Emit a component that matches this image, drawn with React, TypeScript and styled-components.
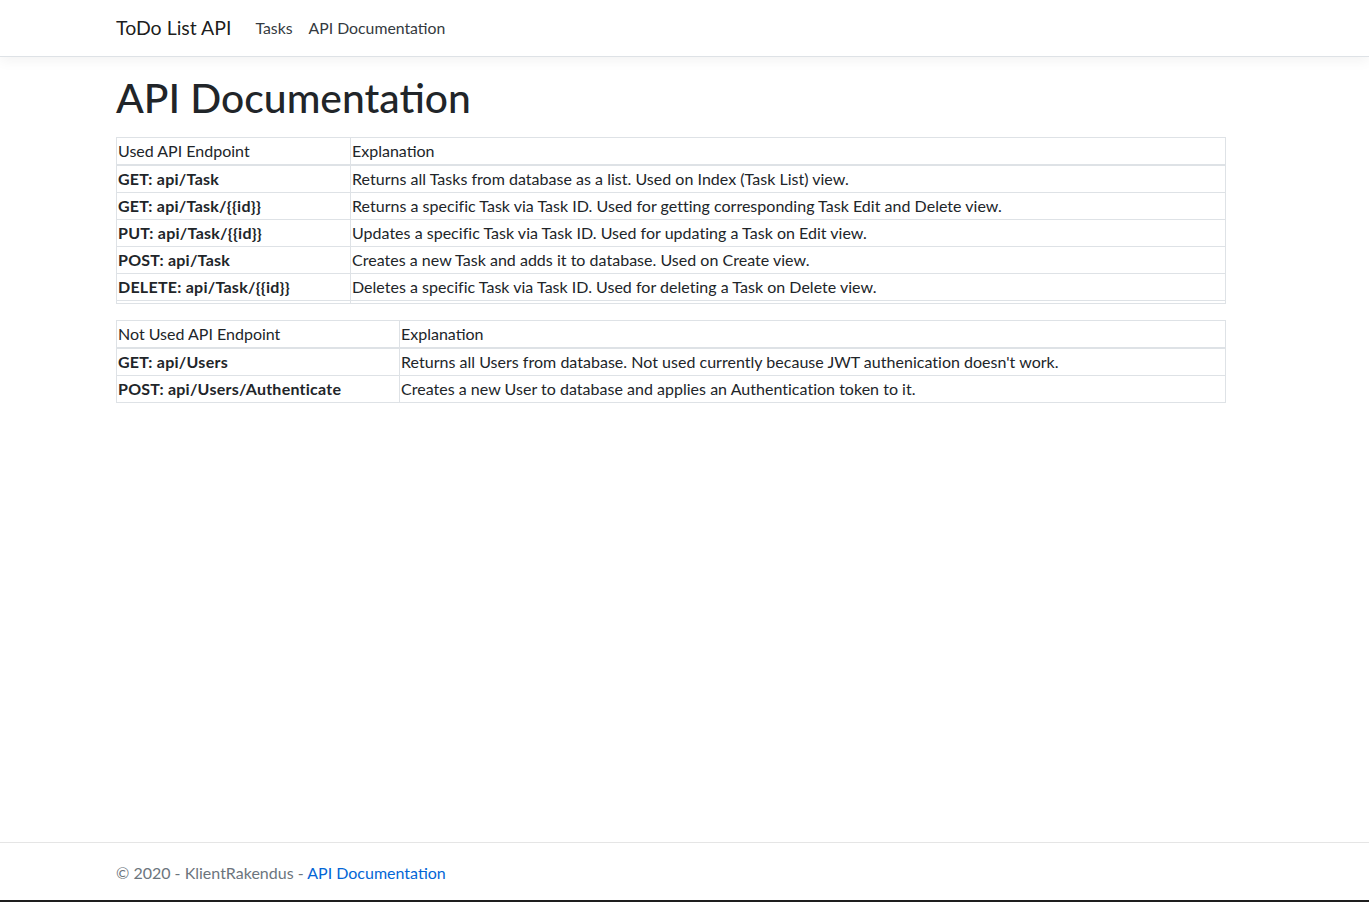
import React from "react";
import styled, { createGlobalStyle } from "styled-components";

const GlobalStyle = createGlobalStyle`
  html, body { margin: 0; padding: 0; }
  body {
    font-family: Lato, "Liberation Sans", Arial, sans-serif;
    font-size: 16px;
    line-height: 1.5;
    color: #212529;
    background: #fff;
  }
  * { box-sizing: border-box; }
`;

const Page = styled.div`
  min-height: 902px;
  display: flex;
  flex-direction: column;
`;

const NavBar = styled.header`
  height: 57px;
  border-bottom: 1px solid #dee2e6;
  box-shadow: 0 4px 12px rgba(0, 0, 0, 0.05);
  margin-bottom: 16px;
  background: #fff;
`;

const Container = styled.div`
  width: 1110px;
  margin-left: 116px;
`;

const NavInner = styled(Container)`
  height: 56px;
  display: flex;
  align-items: center;
`;

const Brand = styled.a`
  font-size: 19.5px;
  line-height: 30px;
  color: rgba(0, 0, 0, 0.9);
  text-decoration: none;
  margin-right: 16px;
`;

const NavLink = styled.a`
  font-size: 15.8px;
  line-height: 24px;
  padding: 8px;
  color: #343a40;
  text-decoration: none;
`;

const Main = styled.main`
  padding-bottom: 16px;
`;

const Title = styled.h1`
  font-size: 40.8px;
  font-weight: 500;
  line-height: 1.2;
  margin: 1px 0 14px;
`;

const Table = styled.table`
  width: 100%;
  border-collapse: collapse;
  border: 1px solid #dee2e6;
  margin-bottom: 16px;
`;

const Col = styled.col<{ $w: number }>`
  width: ${(p) => p.$w}px;
`;

const HeadCell = styled.td`
  padding: 1px 1px;
  border: 1px solid #dee2e6;
  border-bottom-width: 2px;
  font-weight: 400;
  vertical-align: top;
`;

const Cell = styled.td<{ $bold?: boolean }>`
  padding: 1px 1px;
  border: 1px solid #dee2e6;
  font-weight: ${(p) => (p.$bold ? 700 : 400)};
  letter-spacing: ${(p) => (p.$bold ? "0.25px" : "0.02px")};
  vertical-align: top;
`;

const Footer = styled.footer`
  margin-top: auto;
  border-top: 1px solid #e5e5e5;
  line-height: 60px;
  height: 60px;
  color: #6c757d;
  box-shadow: inset 0 -2px 0 #1e1e1e;
`;

const FooterLink = styled.a`
  color: #0366d6;
  text-decoration: none;
`;

type Row = [string, string];

const used: Row[] = [
  ["GET: api/Task", "Returns all Tasks from database as a list. Used on Index (Task List) view."],
  ["GET: api/Task/{{id}}", "Returns a specific Task via Task ID. Used for getting corresponding Task Edit and Delete view."],
  ["PUT: api/Task/{{id}}", "Updates a specific Task via Task ID. Used for updating a Task on Edit view."],
  ["POST: api/Task", "Creates a new Task and adds it to database. Used on Create view."],
  ["DELETE: api/Task/{{id}}", "Deletes a specific Task via Task ID. Used for deleting a Task on Delete view."],
];

const notUsed: Row[] = [
  ["GET: api/Users", "Returns all Users from database. Not used currently because JWT authenication doesn't work."],
  ["POST: api/Users/Authenticate", "Creates a new User to database and applies an Authentication token to it."],
];

function DocTable({ title, rows, firstCol, emptyRow }: { title: string; rows: Row[]; firstCol: number; emptyRow?: boolean }) {
  return (
    <Table>
      <colgroup>
        <Col $w={firstCol} />
        <col />
      </colgroup>
      <thead>
        <tr>
          <HeadCell>{title}</HeadCell>
          <HeadCell>Explanation</HeadCell>
        </tr>
      </thead>
      <tbody>
        {rows.map(([a, b]) => (
          <tr key={a}>
            <Cell $bold>{a}</Cell>
            <Cell>{b}</Cell>
          </tr>
        ))}
        {emptyRow && (
          <tr>
            <Cell />
            <Cell />
          </tr>
        )}
      </tbody>
    </Table>
  );
}

export default function App() {
  return (
    <>
      <GlobalStyle />
      <Page>
        <NavBar>
          <NavInner>
            <Brand href="#">ToDo List API</Brand>
            <NavLink href="#">Tasks</NavLink>
            <NavLink href="#">API Documentation</NavLink>
          </NavInner>
        </NavBar>
        <Main>
          <Container>
            <Title>API Documentation</Title>
            <DocTable title="Used API Endpoint" rows={used} firstCol={234} emptyRow />
            <DocTable title="Not Used API Endpoint" rows={notUsed} firstCol={283} />
          </Container>
        </Main>
        <Footer>
          <Container>
            © 2020 - KlientRakendus - <FooterLink href="#">API Documentation</FooterLink>
          </Container>
        </Footer>
      </Page>
    </>
  );
}
